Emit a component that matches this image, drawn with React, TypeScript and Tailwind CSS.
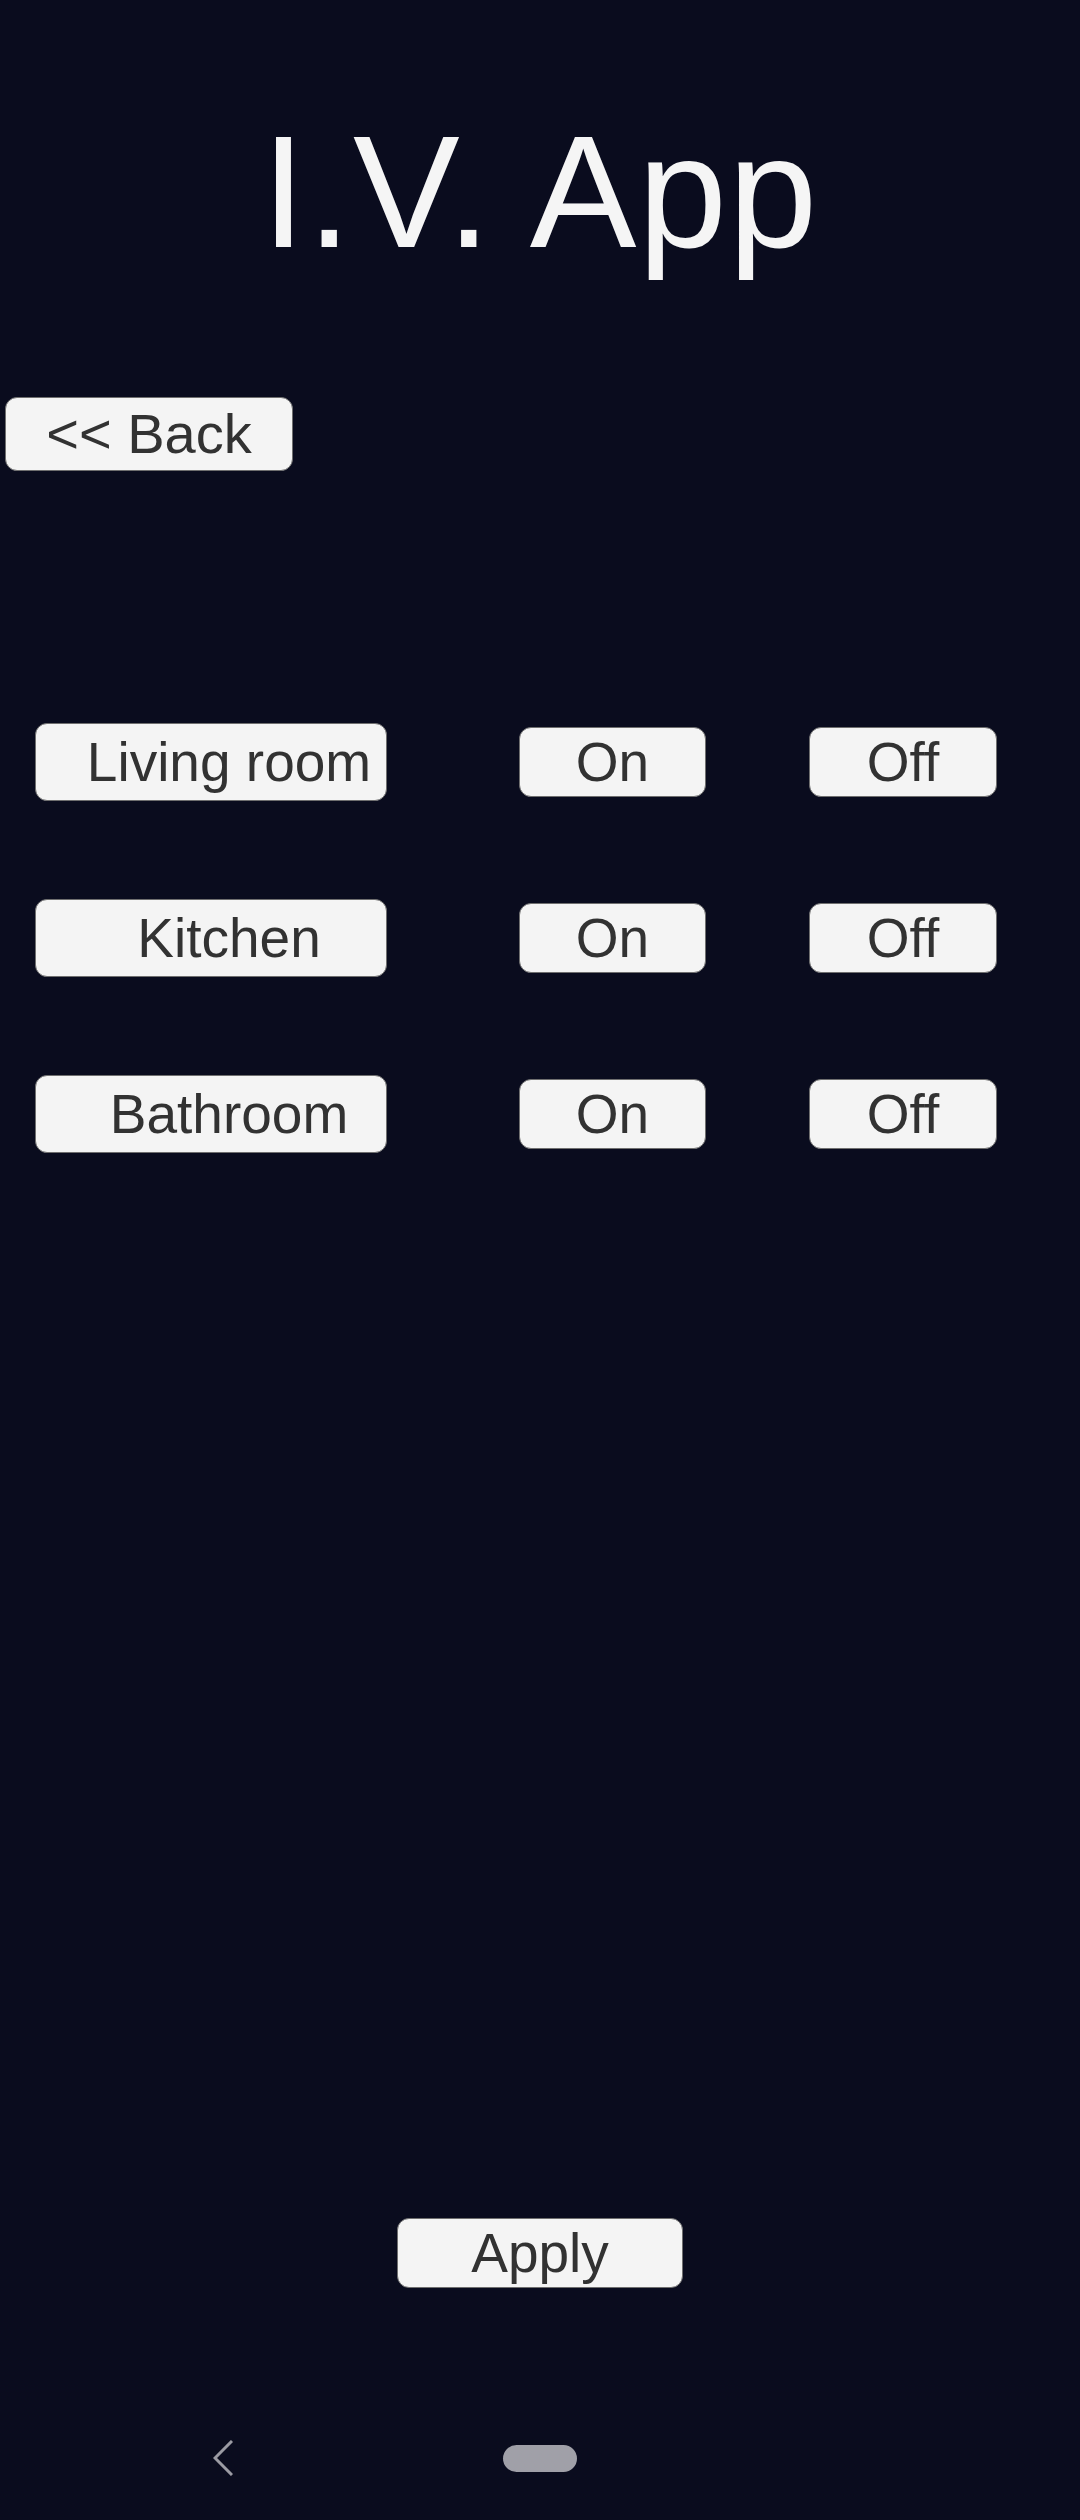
import React from "react";

const font = { fontFamily: '"Liberation Sans", Arial, sans-serif' };

function Btn({ children, className }: { children: React.ReactNode; className: string }) {
  return (
    <div
      className={
        "flex items-center justify-center bg-[#f4f4f4] border border-[#6f6f6f] rounded-[12px] text-[#323232] leading-none " +
        className
      }
    >
      {children}
    </div>
  );
}

const rooms = ["Living room", "Kitchen", "Bathroom"];

export default function App() {
  return (
    <div className="w-[1080px] h-[2520px] bg-[#0a0c1e] flex flex-col overflow-hidden" style={font}>
      <div className="mt-[112px] h-[160px] text-[160px] leading-none text-[#f5f5f5] text-center tracking-[1.5px] whitespace-nowrap">
        I.V. App
      </div>

      <div className="mt-[125px] pl-[5px] flex">
        <Btn className="w-[288px] h-[74px] text-[56px]">&lt;&lt; Back</Btn>
      </div>

      <div className="mt-[252px] flex flex-col gap-[98px]">
        {rooms.map((r) => (
          <div key={r} className="flex items-center pl-[35px] h-[78px]">
            <Btn className="w-[352px] h-[78px] text-[55px] pl-[36px] whitespace-nowrap">{r}</Btn>
            <Btn className="ml-[132px] w-[187px] h-[70px] text-[55px]">On</Btn>
            <Btn className="ml-[103px] w-[188px] h-[70px] text-[55px]">Off</Btn>
          </div>
        ))}
      </div>

      <div className="mt-[1065px] flex justify-center">
        <Btn className="w-[286px] h-[70px] text-[55px]">Apply</Btn>
      </div>

      <div className="mt-[112px] h-[116px] flex items-center pl-[213px]">
        <svg width="20" height="36" viewBox="0 0 20 36" fill="none">
          <polyline points="19,1 2,18 19,35" stroke="#9b9ba3" strokeWidth="3" strokeLinecap="butt" strokeLinejoin="miter" />
        </svg>
        <div className="ml-[270px] w-[74px] h-[27px] rounded-full bg-[#a0a0a8]" />
      </div>
    </div>
  );
}
